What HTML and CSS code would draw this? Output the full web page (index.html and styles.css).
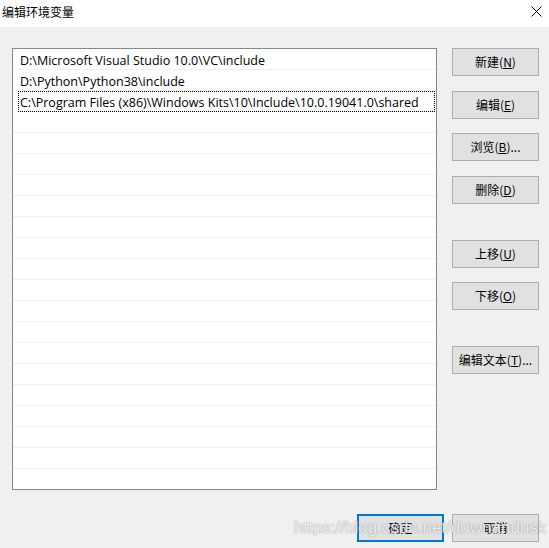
FILE: index.html
```html
<!DOCTYPE html>
<html>
<head>
<meta charset="utf-8">
<link rel="stylesheet" href="styles.css">
</head>
<body>
<div class="dialog">
  <div class="titlebar">
    <span class="title">编辑环境变量</span>
    <svg class="close" width="11" height="11" viewBox="0 0 11 11"><path d="M0.5 0.5L10.5 10.5M10.5 0.5L0.5 10.5" stroke="#000" stroke-width="1" fill="none"/></svg>
  </div>
  <div class="main">
    <div class="list">
      <div class="row">D:\Microsoft Visual Studio 10.0\VC\include</div>
      <div class="row">D:\Python\Python38\include</div>
      <div class="row focus">C:\Program Files (x86)\Windows Kits\10\Include\10.0.19041.0\shared</div>
      <div class="row"></div><div class="row"></div><div class="row"></div><div class="row"></div>
      <div class="row"></div><div class="row"></div><div class="row"></div><div class="row"></div>
      <div class="row"></div><div class="row"></div><div class="row"></div><div class="row"></div>
      <div class="row"></div><div class="row"></div><div class="row"></div><div class="row"></div>
      <div class="row"></div><div class="row"></div><div class="row"></div>
    </div>
    <div class="side">
      <div class="btn">新建(<u>N</u>)</div>
      <div class="btn g15">编辑(<u>E</u>)</div>
      <div class="btn g14">浏览(<u>B</u>)...</div>
      <div class="btn g15">删除(<u>D</u>)</div>
      <div class="btn g36">上移(<u>U</u>)</div>
      <div class="btn g14">下移(<u>O</u>)</div>
      <div class="btn g36">编辑文本(<u>T</u>)...</div>
    </div>
  </div>
  <div class="footer">
    <div class="btn primary">确定</div>
    <div class="btn">取消</div>
  </div>
  <div class="watermark">https://blog.csdn.net/downandusk</div>
</div>
</body>
</html>
```
FILE: styles.css
```css
html, body {
  margin: 0;
  padding: 0;
}
body {
  width: 549px;
  height: 548px;
  background: #f0f0f0;
  font-family: "Noto Sans", "Noto Sans CJK SC", sans-serif;
  font-size: 12px;
  color: #000;
  overflow: hidden;
}
.dialog {
  position: relative;
  width: 549px;
  height: 548px;
}
.titlebar {
  height: 27px;
  background: #fff;
  display: flex;
  align-items: center;
  justify-content: space-between;
  padding: 0 7px 4px 2px;
  box-sizing: border-box;
}
.title {
  font-family: "Noto Sans CJK SC", sans-serif;
  font-size: 12px;
  color: #000;
}
.close {
  display: block;
}
.main {
  display: flex;
  gap: 15px;
  padding: 21px 0 0 12px;
}
.list {
  width: 425px;
  height: 442px;
  box-sizing: border-box;
  border: 1px solid #828790;
  background: #fff;
  overflow: hidden;
}
.row {
  height: 18px;
  padding-top: 2px;
  border-bottom: 1px solid #f0f0f0;
  padding-left: 7px;
  line-height: 20px;
  font-family: "Open Sans", sans-serif;
  font-size: 12.5px;
  color: #000;
  white-space: nowrap;
  box-sizing: content-box;
}
.row.focus {
  outline: 1px dotted #000;
  outline-offset: -1px;
  margin-left: 5px;
  margin-right: 1px;
  padding-left: 2px;
}
.side {
  display: flex;
  flex-direction: column;
}
.btn {
  width: 87px;
  height: 28px;
  box-sizing: border-box;
  border: 1px solid #adadad;
  background: #e1e1e1;
  display: flex;
  align-items: center;
  justify-content: center;
  font-family: "Noto Sans CJK SC", sans-serif;
  font-size: 12px;
  padding-bottom: 1px;
}
.btn u {
  text-underline-offset: 1px;
}
.g14 { margin-top: 14px; }
.g15 { margin-top: 15px; }
.g36 { margin-top: 36px; }
.footer {
  display: flex;
  justify-content: flex-end;
  gap: 8px;
  padding: 24px 10px 0 0;
}
.btn.primary {
  border: 2px solid #0078d7;
}
.watermark {
  position: absolute;
  left: 294px;
  top: 518px;
  font-family: "Liberation Sans", Arial, sans-serif;
  font-size: 17px;
  color: rgba(255, 255, 255, 0.85);
  text-shadow: 0 0 1px rgba(90, 90, 90, 0.6), 0 0 2px rgba(120, 120, 120, 0.3);
  white-space: nowrap;
}
```
